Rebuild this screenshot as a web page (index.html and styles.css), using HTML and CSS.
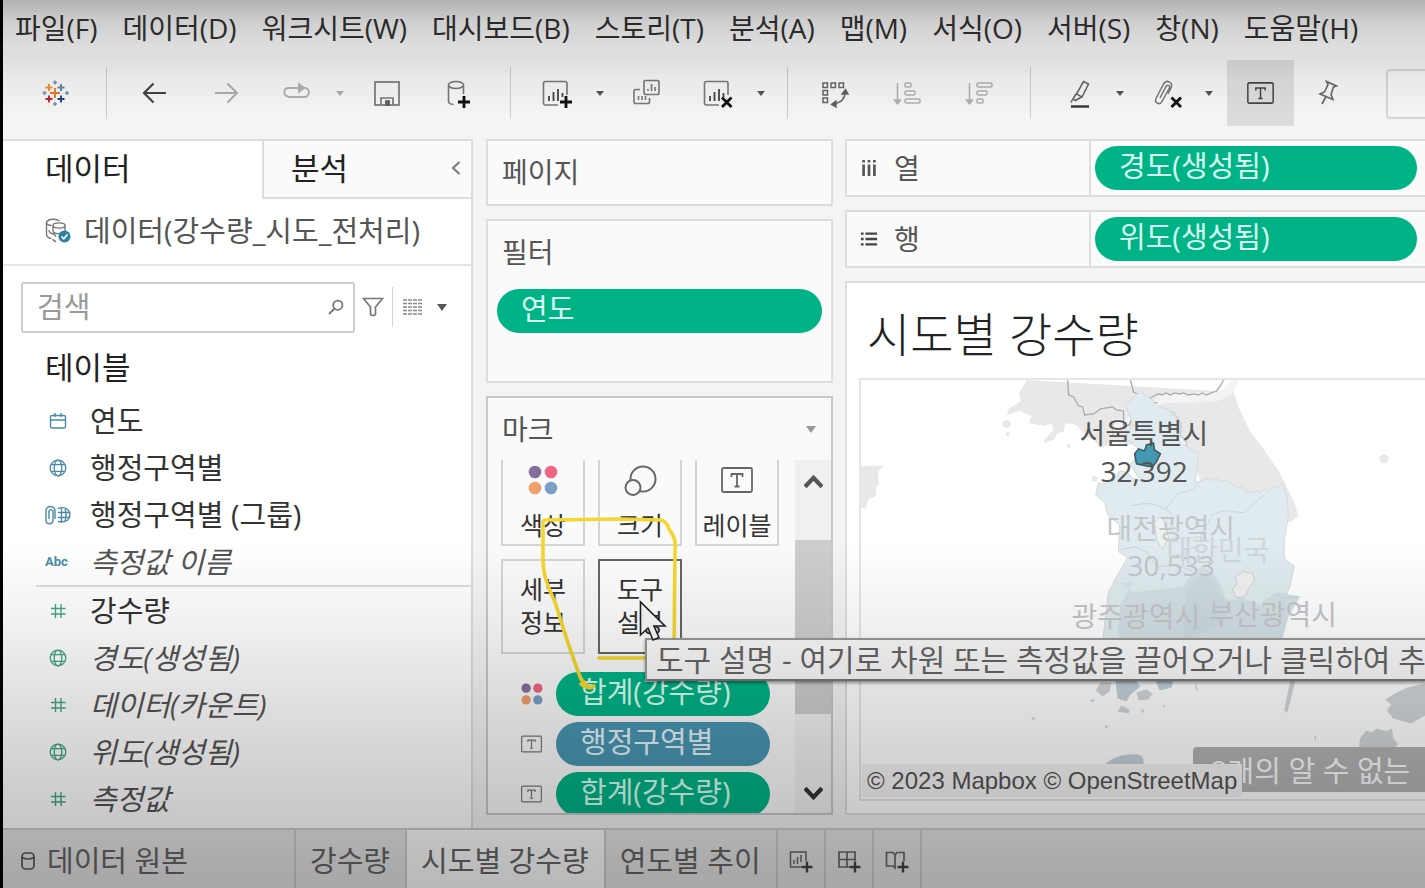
FILE: index.html
```html
<!DOCTYPE html>
<html lang="ko">
<head>
<meta charset="utf-8">
<title>시도별 강수량</title>
<link rel="stylesheet" href="styles.css">
</head>
<body>
<svg class="defs" aria-hidden="true">
  <symbol id="globe" viewBox="0 0 18 18"><g fill="none" stroke="currentColor" stroke-width="1.3"><circle cx="9" cy="9" r="7.8"/><ellipse cx="9" cy="9" rx="3.8" ry="7.8"/><path d="M2.2 5.7h13.6M2.2 12.3h13.6"/></g></symbol>
  <symbol id="hash" viewBox="0 0 18 18"><path d="M6.5 2v14M12 2v14M2 6.5h14.5M2 12h14.5" fill="none" stroke="currentColor" stroke-width="1.4"/></symbol>
  <symbol id="label" viewBox="0 0 32 26"><rect x="1" y="1" width="30" height="24" rx="1.5" fill="none" stroke="currentColor" stroke-width="1.8"/><path d="M10.500 10V7h11v3M16 7v12.500M13.500 19.500h5" fill="none" stroke="currentColor" stroke-width="1.8"/></symbol>
  <symbol id="dots" viewBox="0 0 30 30"><circle cx="7" cy="7" r="6.3" fill="#84709c"/><circle cx="23" cy="7" r="6.3" fill="#ee6680"/><circle cx="7" cy="23" r="6.3" fill="#f0a06c"/><circle cx="23" cy="23" r="6.3" fill="#7aa0c8"/></symbol>
  <symbol id="sheet" viewBox="0 0 32 32"><path d="M27 18V6.500a2 2 0 0 0-2-2H5.500a2 2 0 0 0-2 2V26a2 2 0 0 0 2 2H18" fill="none" stroke="#777" stroke-width="1.6"/><path d="M9 24v-5M13.500 24v-9M18 24V12M22.500 20v-4" stroke="#444" stroke-width="1.8"/></symbol>
</svg>

<nav class="menu" aria-label="메뉴">
  <a href="#">파일(F)</a><a href="#">데이터(D)</a><a href="#">워크시트(W)</a><a href="#">대시보드(B)</a><a href="#">스토리(T)</a><a href="#">분석(A)</a><a href="#">맵(M)</a><a href="#">서식(O)</a><a href="#">서버(S)</a><a href="#">창(N)</a><a href="#">도움말(H)</a>
</nav>

<div class="toolbar" role="toolbar" aria-label="도구 모음">
  <button class="tool" aria-label="시작 페이지"><svg viewBox="0 0 32 32" fill="none" stroke-width="1.9"><path d="M16 11v10M11 16h10" stroke="#e8762c"/><path d="M10 7v7M6.500 10.500h7" stroke="#eb912c"/><path d="M22 7v7M18.500 10.500h7" stroke="#5b879b"/><path d="M10 18.500v7M6.500 22h7" stroke="#c72035"/><path d="M22 18.500v7M18.500 22h7" stroke="#1f457e"/><path d="M16 3.500v4M14 5.500h4M16 25v4M14 27h4M3.500 16h4M5.500 14v4M26 16h4M28 14v4" stroke="#7199a6" stroke-width="1.6"/></svg></button>
  <span class="sep"></span>
  <button class="tool" aria-label="실행 취소"><svg viewBox="0 0 32 32" fill="none" stroke="#444" stroke-width="2.200"><path d="M28 16H6M15.500 6.500L6 16l9.500 9.500"/></svg></button>
  <button class="tool" aria-label="다시 실행"><svg viewBox="0 0 32 32" fill="none" stroke="#aaa" stroke-width="2"><path d="M5 16h22M17.500 6.500L27 16l-9.500 9.500"/></svg></button>
  <button class="tool narrow" aria-label="바꾸기"><svg viewBox="0 0 32 32" fill="none" stroke="#b0b0b0" stroke-width="1.800"><path d="M8 19.500a4.300 4.300 0 0 1 0-8.500h14M24 11a4.500 4.500 0 0 1 1 9H8"/><path d="M19 7l5 4-5 4z" fill="#b0b0b0"/></svg></button>
  <button class="caret pale" aria-label="바꾸기 옵션"><svg viewBox="0 0 8 5"><path d="M0 0h8L4 5z"/></svg></button>
  <button class="tool" aria-label="저장"><svg viewBox="0 0 32 32" fill="none" stroke="#777" stroke-width="1.700"><rect x="4" y="5" width="24" height="23"/><path d="M10 28v-7h12v7"/><path d="M15 28v-4h3v4z" fill="#777" stroke="#555"/></svg></button>
  <button class="tool" aria-label="새 데이터 원본"><svg viewBox="0 0 32 32" fill="none" stroke="#777" stroke-width="1.600"><ellipse cx="13" cy="8" rx="7.500" ry="3.500"/><path d="M5.500 8v16.500c0 1.500 2 2.700 5 3M20.500 8v9"/><path d="M15 25h12M21 19v12" stroke="#111" stroke-width="2.800"/></svg></button>
  <span class="sep"></span>
  <button class="tool narrow" aria-label="새 워크시트"><svg viewBox="0 0 32 32"><use href="#sheet"/><path d="M20 25h12M26 19v12" stroke="#111" stroke-width="2.800"/></svg></button>
  <button class="caret" aria-label="새 워크시트 옵션"><svg viewBox="0 0 8 5"><path d="M0 0h8L4 5z"/></svg></button>
  <button class="tool" aria-label="복제"><svg viewBox="0 0 32 32" fill="none" stroke="#777" stroke-width="1.600"><rect x="13" y="3.500" width="15" height="14" rx="1.500"/><path d="M17 14v-2M20.500 14V7M24 14v-4M9 12.500H4.500a1.500 1.500 0 0 0-1.500 1.500v11a1.500 1.500 0 0 0 1.500 1.500H17a1.500 1.500 0 0 0 1.500-1.500v-4M7.500 23v-4M11 23v-4M14.500 23v-4"/></svg></button>
  <button class="tool narrow" aria-label="시트 지우기"><svg viewBox="0 0 32 32"><use href="#sheet"/><path d="M21 20.500l9.500 9.500M30.500 20.500L21 30" stroke="#111" stroke-width="2.800"/></svg></button>
  <button class="caret" aria-label="지우기 옵션"><svg viewBox="0 0 8 5"><path d="M0 0h8L4 5z"/></svg></button>
  <span class="sep"></span>
  <button class="tool" aria-label="행과 열 바꾸기"><svg viewBox="0 0 32 32" fill="none" stroke="#666" stroke-width="1.500"><rect x="4" y="6" width="4.500" height="4.500"/><rect x="12" y="6" width="4.500" height="4.500"/><rect x="20" y="6" width="4.500" height="4.500"/><rect x="4" y="13.500" width="4.500" height="4.500"/><rect x="4" y="21" width="4.500" height="4.500"/><path d="M26 15c0 7-4 11-12 12"/><path d="M23 17l3.500-4.500L29 17zM17 24l-4.500 3.500L17 30z" fill="#555"/></svg></button>
  <button class="tool" aria-label="오름차순 정렬"><svg viewBox="0 0 32 32" fill="none" stroke="#b0b0b0" stroke-width="1.600"><path d="M6.500 6v20M3.500 23h6l-3 4z" fill="#aaa"/><rect x="14" y="6" width="6" height="4" rx="1.500"/><rect x="14" y="14" width="10" height="4" rx="1.500"/><rect x="14" y="22" width="15" height="4" rx="1.500"/></svg></button>
  <button class="tool" aria-label="내림차순 정렬"><svg viewBox="0 0 32 32" fill="none" stroke="#b0b0b0" stroke-width="1.600"><path d="M6.500 6v20M3.500 23h6l-3 4z" fill="#aaa"/><rect x="14" y="6" width="15" height="4" rx="1.500"/><rect x="14" y="14" width="10" height="4" rx="1.500"/><rect x="14" y="22" width="6" height="4" rx="1.500"/></svg></button>
  <span class="sep"></span>
  <button class="tool narrow" aria-label="강조 표시"><svg viewBox="0 0 32 32" fill="none" stroke="#666" stroke-width="1.600"><path d="M23.500 4.500l5 2.500-6.500 13-5.500-3zM16 17l-3 5 2.500 1.500 6-3.500M12.500 22.500l-1.500 3"/><path d="M11 29.500h18" stroke="#333" stroke-width="2.400"/></svg></button>
  <button class="caret" aria-label="강조 표시 옵션"><svg viewBox="0 0 8 5"><path d="M0 0h8L4 5z"/></svg></button>
  <button class="tool narrow" aria-label="그룹"><svg viewBox="0 0 36 32" class="clip" fill="none" stroke="#777" stroke-width="1.500"><path d="M13 21l6-11.500c1.500-2.500 4.500-.8 3.400 1.500L15 24.500c-2 4-8 1.500-6-3L16.500 7c3-5 10-2 7.500 4l-3 6"/><path d="M24.500 20.500l9.500 9.500M34 20.500L24.500 30" stroke="#111" stroke-width="2.800"/></svg></button>
  <button class="caret" aria-label="그룹 옵션"><svg viewBox="0 0 8 5"><path d="M0 0h8L4 5z"/></svg></button>
  <button class="tool toggle" aria-label="마크 레이블 표시" aria-pressed="true"><svg class="t-icon"><use href="#label"/></svg></button>
  <button class="tool narrow" aria-label="축 고정"><svg viewBox="0 0 32 32" fill="none" stroke="#666" stroke-width="1.600"><path d="M14.500 4.500l10 4.500-3 1-2.500 7.500 2 5-13-5.500 4.500-2 3.500-7.500zM14 19.500l-4 7.500"/></svg></button>
  <select class="fit" aria-label="맞춤"><option></option></select>
</div>

<main class="workspace">
  <aside class="side">
    <div class="side-tabs">
      <button class="side-tab active">데이터</button>
      <button class="side-tab">분석<svg class="chev" viewBox="0 0 10 14"><path d="M8.500 1L2 7l6.500 6" fill="none" stroke="#777" stroke-width="2"/></svg></button>
    </div>
    <div class="source">
      <svg class="source-icon" viewBox="0 0 26 26" fill="none" stroke="#777" stroke-width="1.400"><path d="M1.500 3v13c0 2 2 4 5 4.500M1.500 4c2-3 9-4 13-1M1.500 5c1 2 3 2.500 5 2.500M4 12c0 3 3 4 6 4M8 21c0 1.500 1 2 3 2.500"/><ellipse cx="14" cy="7.500" rx="6" ry="2.600"/><path d="M8 8v5c0 2 5 3.500 10 2M20 8v5M9 16l2 2.500"/><circle cx="19.500" cy="18.500" r="6" fill="#2d83a3" stroke="none"/><path d="M16.500 18.500l2.200 2.300 3.800-4.300" stroke="#fff" stroke-width="1.700"/></svg>
      <span>데이터(강수량_시도_전처리)</span>
    </div>
    <div class="search-row">
      <label class="search"><input type="search" placeholder="검색" aria-label="검색"><svg viewBox="0 0 16 16" fill="none" stroke="#777" stroke-width="1.800"><circle cx="9.800" cy="6.200" r="4.600"/><path d="M6.500 9.500L1 15"/></svg></label>
      <button class="plain" aria-label="필터"><svg class="funnel" viewBox="0 0 22 22" fill="none" stroke="#777" stroke-width="1.700"><path d="M1.500 2.500h19l-7 8.500v7c0 2-5 2-5 0v-7z"/></svg></button>
      <span class="thin"></span>
      <button class="plain view" aria-label="보기"><svg class="lines" viewBox="0 0 19 16" stroke="#888" stroke-width="1.500" stroke-dasharray="4 1"><path d="M0 1h19M0 4.500h19M0 8h19M0 11.500h19M0 15h19"/></svg><svg class="arrow" viewBox="0 0 10 7"><path d="M0 0h10L5 7z" fill="#555"/></svg></button>
    </div>
    <h2>테이블</h2>
    <ul class="fields dims">
      <li><svg viewBox="0 0 18 18" fill="none" stroke="currentColor" stroke-width="1.400"><rect x="1.500" y="3.500" width="15" height="12.500" rx="1.500"/><path d="M1.500 8h15M6 1v4M12 1v4"/></svg>연도</li>
      <li><svg><use href="#globe"/></svg>행정구역별</li>
      <li><svg class="wide" viewBox="0 0 26 20" fill="none" stroke="currentColor" stroke-width="1.400"><path d="M10 14V6c0-6-9-6-9 0v9c0 5 7 5 7 0V6.500c0-2.500-4-2.500-4 0V14M13 3.500c9-3 12 3 12 6.500s-3 8.500-12 6.500M13 7.500h11M13 12.500h11M16.500 3v14M20 4c1.500 4 1.500 8 0 12"/></svg>행정구역별 (그룹)</li>
      <li class="calc"><b class="abc">Abc</b>측정값 이름</li>
    </ul>
    <ul class="fields measures">
      <li><svg><use href="#hash"/></svg>강수량</li>
      <li class="calc"><svg><use href="#globe"/></svg>경도(생성됨)</li>
      <li class="calc"><svg><use href="#hash"/></svg>데이터(카운트)</li>
      <li class="calc"><svg><use href="#globe"/></svg>위도(생성됨)</li>
      <li class="calc"><svg><use href="#hash"/></svg>측정값</li>
    </ul>
  </aside>

  <div class="cards">
    <section class="card pages"><h3>페이지</h3></section>
    <section class="card filters"><h3>필터</h3><button class="pill">연도</button></section>
    <section class="card marks">
      <header><h3>마크</h3><svg class="arrow" viewBox="0 0 10 7"><path d="M0 0h10L5 7z" fill="#999"/></svg></header>
      <div class="marks-body">
        <div class="marks-content">
          <div class="mark-grid">
            <button class="mark cut"><svg class="m-dots"><use href="#dots"/></svg>색상</button>
            <button class="mark cut"><svg class="m-size" viewBox="0 0 34 32" fill="none" stroke="#666" stroke-width="2"><circle cx="20" cy="14" r="12.500"/><circle cx="10" cy="22.500" r="7.500" fill="#fafafa"/></svg>크기</button>
            <button class="mark cut"><svg class="m-label"><use href="#label"/></svg>레이블</button>
            <button class="mark">세부<br>정보</button>
            <button class="mark hot">도구<br>설명</button>
          </div>
          <ul class="encodings">
            <li><svg class="e-dots"><use href="#dots"/></svg><button class="pill">합계(강수량)</button></li>
            <li><svg class="e-label"><use href="#label"/></svg><button class="pill blue">행정구역별</button></li>
            <li><svg class="e-label"><use href="#label"/></svg><button class="pill">합계(강수량)</button></li>
          </ul>
        </div>
        <div class="scroll">
          <svg viewBox="0 0 18 14"><path d="M1 12l8-8.500L17 12" fill="none" stroke="#555" stroke-width="4"/></svg>
          <span class="thumb"></span>
          <svg class="down" viewBox="0 0 18 14"><path d="M1 2l8 8.500L17 2" fill="none" stroke="#333" stroke-width="4"/></svg>
        </div>
      </div>
      <svg class="scribble" viewBox="486 397 347 418" fill="none" stroke="#f5d631" stroke-width="3.600" stroke-linecap="round" stroke-linejoin="round"><path d="M590 689L581 680C571 655 562 625 555 603C548 588 543 577 543 560V523Q543 521 546 521L620 520L660 521Q667 522 669 530C674 538 676 540 675 552L674 655M599 659H650M581 685q8 6 13 2"/></svg>
    </section>
  </div>

  <div class="view-area">
    <div class="shelf"><span class="shelf-name"><svg viewBox="0 0 18 20" stroke="#555" stroke-width="3"><path d="M3 6v13M9 6v13M15 6v13M3 1v3M9 1v3M15 1v3"/></svg>열</span><button class="pill">경도(생성됨)</button></div>
    <div class="shelf"><span class="shelf-name"><svg viewBox="0 0 18 20" stroke="#444" stroke-width="2.600"><path d="M5 4h13M5 10h13M5 16h13M0 4h3M0 10h3M0 16h3"/></svg>행</span><button class="pill">위도(생성됨)</button></div>
    <section class="viz">
      <h1>시도별 강수량</h1>
      <div class="map">
        <svg class="map-canvas" viewBox="860 379 565 423" preserveAspectRatio="xMinYMin slice">
          <path class="land" d="M1026 379l-8 14 2 7-12 8-2 6 13-4 12 5-3 7 16 3 7-3 2 7-8 8-2 5 10-3 4-7 6-1 2-9 11 2 9 11 8 4 7 8 14-6 17 3 40-20 20 30 20 60 40 8 40-1 7-6-4-14-15-30-18-26-11-14-11-23-6-17z"/>
          <path class="land" d="M860 465h23l-6 6 1 12-3 4v8l-8 4-2 8h-5z"/>
          <path class="zone" d="M1112 427l5-10 6 3 9-9h12l8-10 10-9 58-1 13-12h6l-8 15-16 7-48 1-14 3-15 12-18 10-8 4z"/>
          <path class="border" d="M1067 379l1 15 5 2 5 9 4 1 2 8 9-1 7-5 12-2 4 3 7 1v16l6-2 2-7 8-10 2-7 3 2 4-1 9 1M1130 379l3 12 6 3 1 8-4 9M1143 401l12-7 3-1 4 1 3-2 5 2 4-2 5 1 4-1 5 2 5-1 5 1 4-2 4 2 5-2 5-2 4-5 3-6"/>
          <path class="border light" d="M1112 422v14M1152 404l13 8 8-1 8 12-1 11 7 8-4 8"/>
          <path class="region" d="M1152 400l6 6 9 2 13 15-4 12 6 8 16 10-3 29 12-4 4 2 4-3 6 4 5-2 7 5 3 3 7-2 3 6 7 1 3-2 4 2 4-4 4 3 5-5 3 2 6-6 5 14 1 21-4 22v18l3 4 7 4-4 20-5 12-8 16-4 20-6 4-90 30-70 4-6-20 4-36 3-24 19-34-9-6 1-27-12-10-3-12-9-8 3-12 7 1 6-6 9-7 7 2 5 5 8 3-10-16 10-14-15-13 7-13-7-20 15-14z"/>
          <path class="region deep" d="M1120 582l12 10 50-6 6-9 14-12 12 9 8 14 4 13 14-4 20 7 18-12 22 4-12 21-5 18-4 14-156 10-6-31 3-24 12-22z"/>
          <path class="region mid" d="M1186 592l4-9 14-9 12 8 4 14 8 4-4 20-40 20z"/>
          <path class="islet" d="M1236 597l-4-8 5-6-2-7 8-5 10 2 1 7-5 7-5 9zM1154 522l6-6 5 6 3 15-6 12-6-10z"/>
          <path class="edge" d="M1130 505l12-2 10 0 13 5 12-15 15-4 6-6M1165 508l8 7-3 15 10 8 20-2 12-22 12-4 20 2 20-18M1120 549l15-3 12 6 9 14 20-1 16 5M1182 566l4-17 14-4M1262 602l14-9 6 5 16-2"/>
          <path class="seoul" d="M1134 453l4-5 6 2 2-6 7-2 1 7 6 4-4 8-4 5-7-1-9-2z"/>
          <g class="land"><circle cx="1384" cy="458" r="4.500"/><circle cx="1006" cy="423" r="4"/><circle cx="1007" cy="433" r="2"/><circle cx="1068" cy="445" r="2"/><circle cx="1094" cy="478" r="3"/></g>
          <path class="isle blue" d="M1102 766c8-8 18-12 33-12 6 0 10 4 7 12zM1115 680h20l5 6-10 8-4 7-9-3zM1155 680h18l-2 7-12 3z"/>
          <path class="isle" d="M1095 690l5-8h11l-2 9-7 5zM1090 699h4v2h-4zM1136 692l10-3 6 4-4 6-10 1zM1117 711l4-6 8 4-1 4zM1140 708l4 2-2 3zM1162 704l3 1-2 2zM1195 681l3 10-3-3zM1290 680l5 1-4 16-4 15-3-2zM1031 716l4 2-3 2zM1104 724l4 2-3 2zM1314 735l2 1-1 6zM1385 699l10-6 12-6 18-4v32l-14 8-18-5-6-8 4-6zM1360 738l6-8 6 2 5-4 9 3 6-3 1 10 5 6-6 8h-34z"/>
          <g class="map-text"><text x="1079" y="443">서울특별시</text><text x="1100" y="481">32,392</text></g>
          <g class="map-text faint"><text x="1106" y="538">대전광역시</text><text x="1127" y="575">30,533</text><text x="1071" y="626">광주광역시</text><text x="1208" y="624">부산광역시</text></g>
          <text class="map-text faintest" x="1166" y="560">대한민국</text>
        </svg>
        <div class="unknown">2개의 알 수 없는</div>
        <div class="credit">© 2023 Mapbox © OpenStreetMap</div>
      </div>
    </section>
  </div>
  <div class="tip" role="tooltip">도구 설명 - 여기로 차원 또는 측정값을 끌어오거나 클릭하여 추가</div>
  <svg class="cursor" viewBox="0 0 28 42"><path d="M1.500 2v33l7.500-7 5 12 6-2.500-5-11.500h11z" fill="#fafafa" stroke="#222" stroke-width="1.600"/></svg>
</main>

<nav class="sheets" aria-label="시트">
  <a class="origin" href="#"><svg viewBox="0 0 14 20" fill="none" stroke="#555" stroke-width="1.700"><rect x="1" y="2" width="12" height="16" rx="3.500"/><path d="M1 6.500q6 3 12 0"/></svg>데이터 원본</a>
  <a href="#">강수량</a><a class="current" href="#">시도별 강수량</a><a href="#">연도별 추이</a>
  <button aria-label="새 워크시트"><svg viewBox="0 0 24 24" fill="none" stroke="#666" stroke-width="1.500"><path d="M17 12V3H1.500v15H12M5 15v-4M8.500 15V8M12 13V6"/><path d="M12.500 18h11M18 12.500v11" stroke="#444" stroke-width="2.400"/></svg></button>
  <button aria-label="새 대시보드"><svg viewBox="0 0 24 24" fill="none" stroke="#666" stroke-width="1.700"><path d="M18 12V3H2v15h10M2 10.500h16M10 3v15"/><path d="M12.500 18h11M18 12.500v11" stroke="#444" stroke-width="2.400"/></svg></button>
  <button aria-label="새 스토리"><svg viewBox="0 0 24 24" fill="none" stroke="#666" stroke-width="1.700"><path d="M19 12V3.500h-7L10 6 8 3.500H1.500V17H8l2 2V6"/><path d="M12.500 18h11M18 12.500v11" stroke="#444" stroke-width="2.400"/></svg></button>
</nav>
<div class="shade"></div>
</body>
</html>
```
FILE: styles.css
```css
* { box-sizing: border-box; }
body {
  margin: 0; height: 100vh; display: flex; flex-direction: column; overflow: hidden;
  border-left: 3px solid #000; background: #f4f4f4; color: #333;
  font: 400 29px/40px "Open Sans", "Noto Sans CJK KR", sans-serif;
}
h1, h2, h3, ul { margin: 0; padding: 0; font-weight: 400; list-style: none; }
button, input, select { font: inherit; color: inherit; margin: 0; padding: 0; border: 0; background: none; }
a { color: inherit; text-decoration: none; }
svg { display: block; flex: none; }
.defs { position: absolute; width: 0; height: 0; }

.menu { display: flex; gap: 25px; flex: none; height: 49px; padding: 8px 12px 0; background: #fafafa; color: #333; font-size: 28px; white-space: nowrap; }

.toolbar { display: flex; align-items: center; flex: none; height: 90px; padding: 0 0 2px 16px; }
.tool { display: flex; flex: none; align-items: center; justify-content: center; width: 72px; height: 66px; }
.tool svg { width: 32px; height: 32px; }
.tool .clip { width: 36px; }
.tool.narrow, .tool.toggle { width: 67px; }
.tool.toggle { margin-left: 7px; background: #dcdcdc; color: #444; }
.tool .t-icon { width: 27px; height: 24px; }
.sep { flex: none; width: 1px; height: 52px; margin: 0 11px 0 15px; background: #ccc; }
.caret { display: flex; flex: none; justify-content: center; width: 22px; }
.caret svg { width: 8px; height: 5px; fill: #555; }
.caret.pale svg { fill: #aaa; }
.fit { flex: 1; min-width: 40px; height: 50px; margin: 2px -4px 0 25px; border: 2px solid #d4d4d4; border-radius: 4px; appearance: none; }

.workspace { position: relative; flex: 1; min-height: 0; display: grid; grid-template-columns: 470px 347px minmax(0, 1fr); }
.side { border-top: 2px solid #ddd; border-right: 2px solid #ddd; background: #fff; overflow: hidden; }
.side-tabs { display: flex; height: 58px; color: #222; font-size: 31px; }
.side-tab { flex: 1; display: flex; align-items: center; justify-content: space-between; padding: 0 10px 2px 27px; border: solid #ddd; border-width: 0 0 2px 2px; background: #fafafa; }
.side-tab.active { flex: none; width: 259px; padding: 0 0 4px 42px; border: 0; background: #fff; }
.chev { width: 10px; height: 16px; }
.source { display: flex; align-items: center; gap: 13px; height: 67px; padding: 0 0 2px 42px; border-bottom: 2px solid #e4e4e4; color: #555; white-space: nowrap; }
.source-icon { width: 26px; height: 26px; }
.search-row { display: flex; align-items: center; gap: 7px; height: 82px; padding-left: 18px; }
.search { display: flex; align-items: center; width: 334px; height: 51px; padding: 0 9px 0 14px; border: 2px solid #ccc; border-radius: 3px; }
.search input { flex: 1; min-width: 0; outline: 0; }
.search input::placeholder { color: #999; opacity: 1; }
.search svg { width: 16px; height: 16px; }
.funnel { width: 22px; height: 22px; }
.thin { width: 1px; height: 40px; margin-left: 1px; background: #d4d4d4; }
.view { display: flex; align-items: center; gap: 15px; margin-left: 3px; }
.lines { width: 19px; height: 16px; }
.arrow { width: 10px; height: 7px; }
.side h2 { height: 49px; padding: 0 0 9px 42px; font-size: 31px; line-height: 38px; color: #222; }
.fields li { display: flex; align-items: center; height: 47px; padding-left: 87px; color: #333; white-space: nowrap; }
.fields li > svg, .abc { width: 26px; height: 18px; margin-left: -45px; margin-right: 19px; color: #4a8ba5; }
.fields li > .wide { height: 20px; }
.abc { font: 700 13px/18px Roboto, sans-serif; }
.fields .calc { font-style: italic; color: #555; }
.measures { margin-left: 33px; border-top: 2px solid #ddd; }
.fields.measures li { padding-left: 54px; }
.fields.measures li > svg { color: #45a683; }

.cards { display: flex; flex-direction: column; gap: 13px; min-height: 0; padding: 0 0 13px; margin-left: 13px; margin-right: -13px; }
.card { position: relative; border: 2px solid #ddd; background: #fafafa; }
.card h3 { padding: 0 14px; font-size: 28px; color: #555; }
.pages { height: 67px; padding-top: 11px; }
.filters { height: 164px; padding: 11px 9px 0; }
.filters h3 { padding: 0 5px; margin-bottom: 17px; }
.pill { display: block; width: 100%; height: 44px; padding: 0 24px 4px; border-radius: 22px; background: #00b386; color: #d9fff2; line-height: 40px; text-align: left; white-space: nowrap; }
.pill.blue { background: #4996b2; color: #e4f4fa; }
.marks { flex: 1; min-height: 0; display: flex; flex-direction: column; border-color: #c8c8c8; }
.marks header { display: flex; align-items: center; justify-content: space-between; flex: none; height: 62px; padding-right: 15px; }
.marks-body { flex: 1; min-height: 0; display: flex; overflow: hidden; }
.marks-content { flex: 1; min-width: 0; }
.mark-grid { display: grid; grid-template-columns: repeat(3, 84px); gap: 13px; padding-left: 13px; }
.mark { display: flex; flex-direction: column; align-items: center; justify-content: center; height: 95px; padding-bottom: 2px; border: 2px solid #d4d4d4; color: #333; font-size: 25px; line-height: 33px; white-space: nowrap; }
.mark.cut { justify-content: space-between; height: 86px; padding-top: 5px; border-top: 0; }
.mark.hot { border-color: #666; background: #fdfdfd; }
.m-dots { width: 30px; height: 30px; }
.m-size { width: 34px; height: 32px; }
.m-label { width: 32px; height: 30px; color: #666; }
.encodings { display: flex; flex-direction: column; gap: 6px; padding: 18px 25px 0 33px; }
.encodings li { display: grid; grid-template-columns: 35px 1fr; align-items: center; }
.e-dots { width: 22px; height: 22px; }
.e-label { width: 21px; height: 18px; color: #777; }
.scroll { flex: none; width: 36px; display: flex; flex-direction: column; align-items: center; padding: 14px 0 12px; background: #f0f0f0; }
.scroll svg { width: 19px; height: 15px; }
.thumb { width: 36px; height: 174px; margin-top: 51px; background: #cdcdcd; }
.scroll .down { margin-top: auto; }
.scribble { position: absolute; left: -2px; top: -2px; width: 347px; height: 418px; pointer-events: none; }

.view-area { display: flex; flex-direction: column; gap: 13px; min-width: 0; min-height: 0; padding: 0 0 13px; margin-left: 25px; }
.shelf { display: flex; align-items: center; flex: none; height: 58px; padding-right: 8px; border: 2px solid #ddd; border-right: 0; background: #fafafa; }
.shelf-name { display: flex; align-items: center; gap: 16px; flex: none; width: 244px; height: 54px; margin-right: 4px; padding: 0 0 0 13px; border-right: 2px solid #ddd; color: #555; font-size: 28px; }
.shelf-name svg { width: 18px; height: 18px; }
.shelf .pill { flex: 1; }
.viz { flex: 1; min-height: 0; display: flex; flex-direction: column; padding: 24px 0 12px 12px; border: 2px solid #ddd; border-right: 0; background: #fff; }
.viz h1 { flex: none; height: 71px; padding-left: 8px; color: #222; font-size: 47px; font-weight: 300; line-height: 54px; }
.map { position: relative; flex: 1; min-height: 0; border: 2px solid #e6e6e6; border-right: 0; overflow: hidden; }
.map-canvas { width: 100%; height: 100%; }
.land { fill: #e8e8e8; }
.zone { fill: #f3f3f3; }
.border { fill: none; stroke: #aaa; stroke-width: 1.300; }
.border.light { stroke: #ccc; }
.region { fill: #dfebee; stroke: #d6d9da; stroke-width: 1; }
.region.deep { fill: #d3e0e4; stroke: none; }
.region.mid { fill: #cddbe1; }
.islet { fill: #eef1ef; stroke: #cfcfcf; }
.edge { fill: none; stroke: #cdd5d8; }
.seoul { fill: #4399b1; stroke: #3f555f; stroke-width: 1.500; }
.isle { fill: #d2d6d8; }
.isle.blue { fill: #c4d1d9; }
.map-text { fill: #555; font-size: 28px; }
.map-text.faint { fill: #c3c7c9; }
.map-text.faintest { fill: #cdd6d9; }
.unknown { position: absolute; right: 0; bottom: 7px; width: 232px; height: 45px; padding: 4px 0 0 18px; border-radius: 4px 0 0 0; background: #b3b3b3; color: #fafafa; white-space: nowrap; overflow: hidden; }
.credit { position: absolute; left: 1px; bottom: 2px; width: 380px; height: 33px; padding-left: 5px; background: #f4f4f4; color: #555; font: 24px/33px "Liberation Sans", sans-serif; white-space: nowrap; }

.tip { position: absolute; left: 642px; right: -2px; top: 499px; height: 43px; padding-left: 9px; border: 2px solid #999; border-bottom-color: #777; background: #fafafa; box-shadow: 0 2px 3px rgba(0, 0, 0, .4); color: #666; font-size: 30px; white-space: nowrap; overflow: hidden; }
.cursor { position: absolute; left: 636px; top: 461px; width: 28px; height: 42px; }

.sheets { display: flex; flex: none; height: 60px; border-top: 2px solid #ccc; background: #e5e5e5; color: #666; }
.sheets a, .sheets button { display: flex; align-items: center; padding: 0 15px 0 14px; border-right: 2px solid #ccc; white-space: nowrap; }
.sheets a { padding-top: 4px; }
.sheets .origin { gap: 12px; width: 293px; padding-left: 18px; }
.origin svg { width: 14px; height: 20px; }
.sheets .current { background: #fcfcfc; }
.sheets button { justify-content: center; width: 48px; padding: 4px 0 0; }
.sheets button svg { width: 24px; height: 24px; }

.shade { position: fixed; inset: 0; pointer-events: none; background: linear-gradient(rgba(0, 0, 0, .29), rgba(0, 0, 0, .17) 22px, rgba(0, 0, 0, .1) 50px, rgba(0, 0, 0, .04) 80px, transparent 115px), linear-gradient(to top, rgba(0, 0, 0, .27), rgba(0, 0, 0, .22) 65px, rgba(0, 0, 0, .13) 180px, rgba(0, 0, 0, .06) 260px, transparent 345px); }
```
